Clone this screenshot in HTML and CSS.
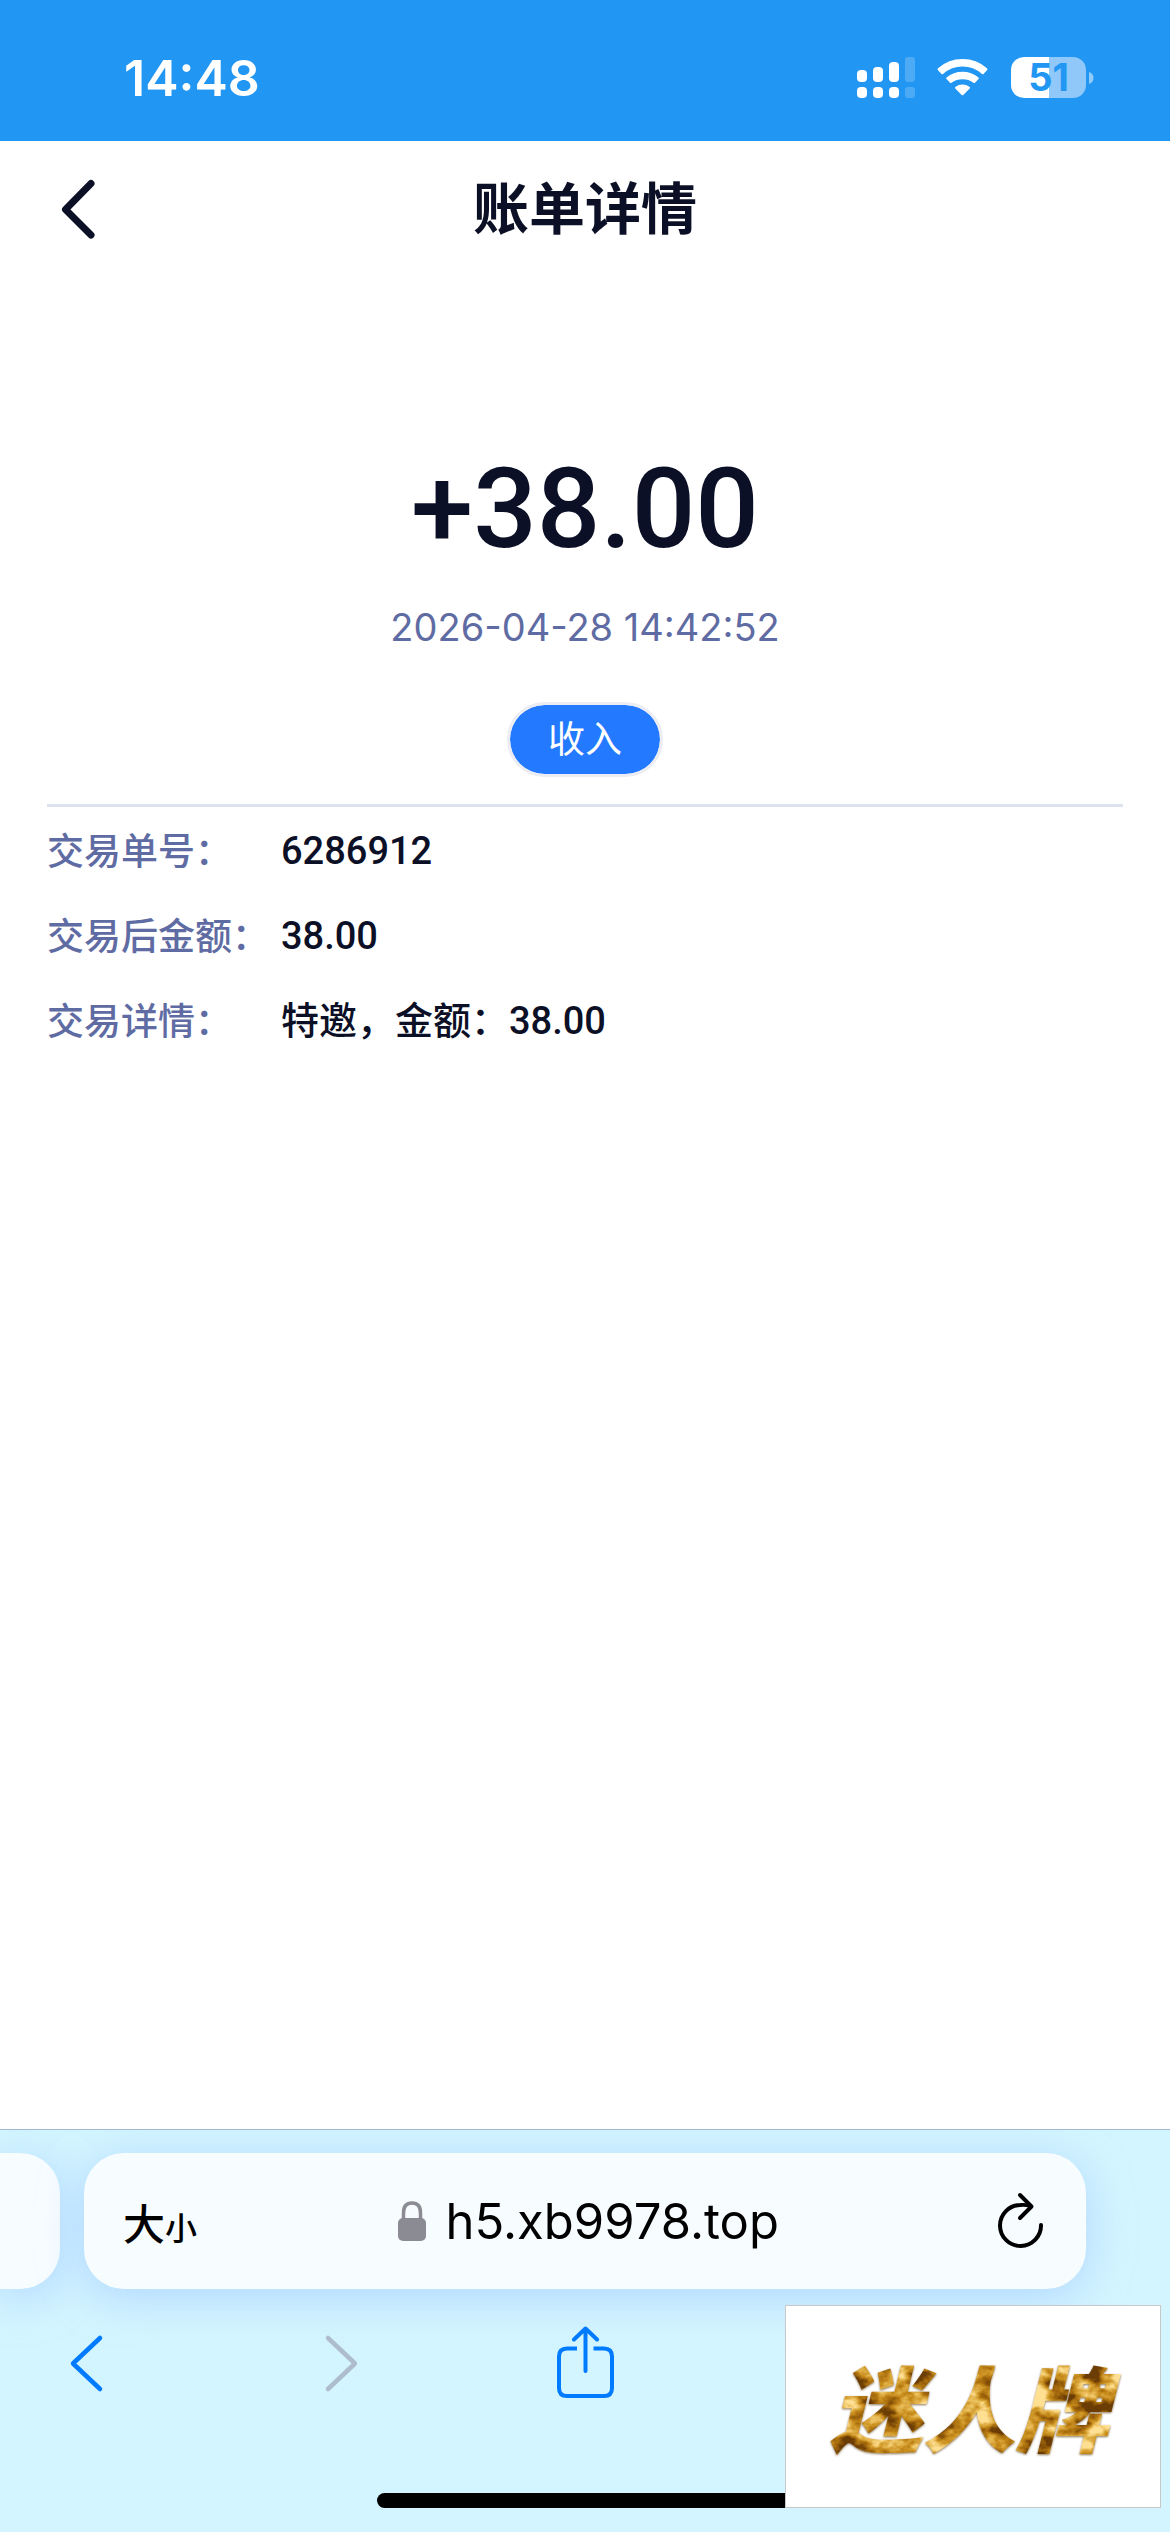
FILE: index.html
```html
<!DOCTYPE html>
<html lang="zh-CN">
<head>
    <meta charset="UTF-8">
    <meta name="viewport" content="width=device-width, initial-scale=1.0">
    <title>账单详情</title>
    <link rel="stylesheet" href="styles.css">
</head>
<body>
    <div class="status">
        <span class="time">14:48</span>
        <div class="status-icons">
            <svg class="signal" width="58" height="42" viewBox="0 0 58 42" fill="#fff">
                <rect x="0" y="13" width="10" height="12" rx="4"/>
                <rect x="16" y="10" width="10" height="15" rx="4"/>
                <rect x="32" y="5" width="10" height="20" rx="4"/>
                <rect x="48" y="0" width="10" height="25" rx="3" opacity=".2"/>
                <rect x="0" y="30" width="10" height="11" rx="4"/>
                <rect x="16" y="30" width="10" height="11" rx="4"/>
                <rect x="32" y="30" width="10" height="11" rx="4"/>
                <rect x="48" y="30" width="10" height="11" rx="3" opacity=".2"/>
            </svg>
            <svg class="wifi" width="52" height="42" viewBox="0 0 52 42" fill="#fff">
                <path d="M1 13.2Q0 12.200 1 11.200Q11.500 2 25.500 2Q39.500 2 50 11.200Q51 12.200 50 13.200L46.500 17Q45.800 17.600 45 17Q36.500 9.600 25.500 9.600Q14.500 9.600 6 17Q5.200 17.600 4.500 17Z"/>
                <path d="M9.500 22Q8.800 21.200 9.500 20.500Q16.300 14.800 25.500 14.800Q34.700 14.800 41.500 20.500Q42.200 21.200 41.500 22L38 25.700Q37.200 26.300 36.400 25.700Q31.800 22.300 25.500 22.300Q19.200 22.300 14.600 25.700Q13.800 26.300 13 25.700Z"/>
                <path d="M18.300 31.500Q17.500 30.700 18.300 29.900Q21.500 27.500 25.500 27.500Q29.500 27.500 32.700 29.900Q33.500 30.700 32.700 31.500L26.300 38Q25.500 38.700 24.700 38Z"/>
            </svg>
            <div class="battery">
                <span class="battery-level">51</span>
                <svg width="5" height="12" viewBox="0 0 5 12"><path d="M0 0Q4.500 1.500 4.500 6T0 12Z" fill="#fff" opacity=".5"/></svg>
            </div>
        </div>
    </div>

    <header class="header">
        <button class="back" aria-label="返回">
            <svg width="36" height="60" viewBox="0 0 36 60"><path d="M31 4.500L5.500 30.500L31 56" fill="none" stroke="#0c1026" stroke-width="7" stroke-linecap="round" stroke-linejoin="round"/></svg>
        </button>
        <h1 class="title">账单详情</h1>
    </header>

    <main class="bill">
        <div class="summary">
            <div class="amount">+38.00</div>
            <div class="date">2026-04-28 14:42:52</div>
            <span class="tag">收入</span>
        </div>
        <dl class="details">
            <div class="row">
                <dt>交易单号：</dt>
                <dd>6286912</dd>
            </div>
            <div class="row">
                <dt>交易后金额：</dt>
                <dd>38.00</dd>
            </div>
            <div class="row">
                <dt>交易详情：</dt>
                <dd>特邀，金额：38.00</dd>
            </div>
        </dl>
    </main>

    <footer class="browser">
        <div class="tabs">
            <div class="tab-prev"></div>
            <div class="address">
                <button class="text-size" aria-label="文字大小"><span>大</span><span class="small">小</span></button>
                <label class="url">
                    <svg width="28" height="40" viewBox="0 0 28 40"><path d="M5.500 19V12C5.500 5 9 2 14 2S22.500 5 22.500 12V19" fill="none" stroke="#8a8b93" stroke-width="3.500"/><rect x="0" y="17" width="28" height="23" rx="5" fill="#8a8b93"/></svg>
                    <input class="url-input" type="text" value="h5.xb9978.top" aria-label="网址">
                </label>
                <button class="reload" aria-label="刷新">
                    <svg width="46" height="58" viewBox="0 0 46 58" fill="none" stroke="#000" stroke-width="4" stroke-linecap="round" stroke-linejoin="round"><path d="M43 33A20.500 20.500 0 1 1 22.500 13Q28 12.500 32 14"/><path d="M22 3L33.500 14.500L22 26"/></svg>
                </button>
            </div>
        </div>
        <nav class="toolbar">
            <button aria-label="后退">
                <svg width="64" height="72" viewBox="0 0 64 72"><path d="M45 12L18 37.500L45 63" fill="none" stroke="#007aff" stroke-width="4.500" stroke-linecap="round" stroke-linejoin="round"/></svg>
            </button>
            <button aria-label="前进" disabled>
                <svg width="64" height="72" viewBox="0 0 64 72"><path d="M24 12L51 37.500L24 63" fill="none" stroke="#aebdcb" stroke-width="4.500" stroke-linecap="round" stroke-linejoin="round"/></svg>
            </button>
            <button aria-label="分享">
                <svg width="64" height="72" viewBox="0 0 64 72" fill="none" stroke="#007aff" stroke-width="4"><path d="M24 22.500H14Q6 22.500 6 30.500V62Q6 70 14 70H51Q59 70 59 62V30.500Q59 22.500 51 22.500H40.500"/><path d="M32.500 45V2.500M21 13.500L32.500 2.500L44 13.500" stroke-linecap="round" stroke-linejoin="round"/></svg>
            </button>
        </nav>
        <div class="home-bar"></div>
        <div class="brand">
            <span>迷人牌</span>
            <!-- gold foil texture for the brand text -->
            <svg class="defs" width="0" height="0">
                <filter id="gold" color-interpolation-filters="sRGB">
                    <feTurbulence type="fractalNoise" baseFrequency="0.035 0.05" numOctaves="4" seed="7"/>
                    <feColorMatrix values="2.600 0 0 0 -0.800  2.600 0 0 0 -0.800  2.600 0 0 0 -0.800  0 0 0 0 1"/>
                    <feComponentTransfer result="foil">
                        <feFuncR type="table" tableValues="0.42 0.64 0.79 0.9 1"/>
                        <feFuncG type="table" tableValues="0.24 0.41 0.56 0.72 0.88"/>
                        <feFuncB type="table" tableValues="0.02 0.05 0.12 0.32 0.58"/>
                    </feComponentTransfer>
                    <feComposite in="foil" in2="SourceAlpha" operator="in"/>
                </filter>
            </svg>
        </div>
    </footer>
</body>
</html>
```

FILE: styles.css
```css
*{
    box-sizing: border-box;
}
body{
    margin:0;
    min-height:100vh;
    display: flex;
    flex-direction: column;
    background: #fff;
    color: #0c1026;
    font-family: Inter, "Noto Sans CJK SC", sans-serif;
}
button{
    padding:0;
    border:0;
    background: none;
    color: inherit;
    font-family: inherit;
    cursor: pointer;
}
svg{
    display: block;
}

/* status bar */
.status{
    height:141px;
    padding: 14px 76px 0 124px;
    display: flex;
    align-items: center;
    justify-content: space-between;
    background: #2196f3;
    color: white;
}
.time{
    font-size:50px;
    font-weight:600;
}
.status-icons{
    display: flex;
    align-items: center;
    gap:22px;
}
.battery{
    display: flex;
    align-items: center;
    gap:3px;
}
.battery-level{
    width:75px;
    height:41px;
    border-radius:13px;
    background: linear-gradient(90deg, #fff 51%, #90c8f9 51%);
    color: #2196f3;
    font-size:38px;
    font-weight:700;
    line-height:41px;
    text-align: center;
}

/* page header */
.header{
    height:136px;
    padding: 0 60px;
    display: grid;
    grid-template-columns: 1fr auto 1fr;
    align-items: center;
}
.title{
    margin:0;
    font-size:56px;
    font-weight:600;
    line-height:80px;
}

/* bill */
.bill{
    flex:1;
    padding: 168px 47px 0;
}
.summary{
    display: flex;
    flex-direction: column;
    align-items: center;
    padding-bottom:27px;
    border-bottom: 3px solid #dce2ef;
}
.amount{
    font-family: Roboto, sans-serif;
    font-size:112px;
    font-weight:500;
    line-height:128px;
}
.date{
    margin-top:26px;
    color: #5f6ca3;
    font-size:38px;
    line-height:56px;
}
.tag{
    margin-top:47px;
    padding: 0 38px;
    border: 3px solid #ebedf2;
    border-radius:38px;
    background: #2379ff;
    background-clip: padding-box;
    color: white;
    font-size:37px;
    line-height:69px;
}
.details{
    margin:0;
    padding-top:2px;
}
.row{
    display: grid;
    grid-template-columns: 234px 1fr;
    line-height:85px;
}
.row dt{
    color: #5f6ca3;
    font-size:37px;
    font-weight:500;
    white-space: nowrap;
}
.row dd{
    margin:0;
    font-family: Roboto, "Noto Sans CJK SC", sans-serif;
    font-size:38px;
    font-weight:500;
}

/* browser bar */
.browser{
    position: relative;
    overflow: hidden;
    padding: 23px 0 24px;
    border-top: 1px solid #9fb9d2;
    background: #d3f5ff;
    color: black;
}
.tabs{
    display: flex;
    gap:24px;
    padding-right:84px;
}
.tab-prev, .address{
    height:136px;
    background: #f7fcff;
    box-shadow: 0 8px 44px rgba(155, 195, 255, 0.6);
}
.tab-prev{
    width:60px;
    border-radius: 0 40px 40px 0;
}
.address{
    flex:1;
    display: grid;
    grid-template-columns: 1fr auto 1fr;
    align-items: center;
    padding: 0 42px 0 39px;
    border-radius:40px;
}
.text-size{
    justify-self: start;
    font-size:42px;
    font-weight:500;
    color: black;
}
.text-size .small{
    font-size:32px;
}
.url{
    display: flex;
    align-items: center;
    gap:20px;
    padding-left:8px;
}
.url-input{
    width:332px;
    padding:0;
    border:0;
    outline: none;
    background: none;
    color: black;
    font-family: inherit;
    font-size:49px;
}
.reload{
    justify-self: end;
}
.toolbar{
    width: calc(50% + 32px);
    margin-top:37px;
    padding-left:55px;
    display: flex;
    justify-content: space-between;
}
.home-bar{
    width:416px;
    height:15px;
    margin: 95px auto 0;
    border-radius:8px;
    background: black;
}

/* brand stamp over the toolbar */
.brand{
    position: absolute;
    right:9px;
    bottom:24px;
    width:376px;
    height:203px;
    display: flex;
    align-items: center;
    justify-content: center;
    border: 1px solid #c8c8c8;
    background: white;
}
.brand span{
    padding: 0 16px 4px 8px;
    color: #b87a14;
    filter: url(#gold) drop-shadow(0 1px 1px rgba(90, 60, 10, 0.7));
    font-family: "Noto Sans CJK SC", sans-serif;
    font-size:93px;
    font-style: italic;
    font-weight:900;
    line-height:140px;
}
```
